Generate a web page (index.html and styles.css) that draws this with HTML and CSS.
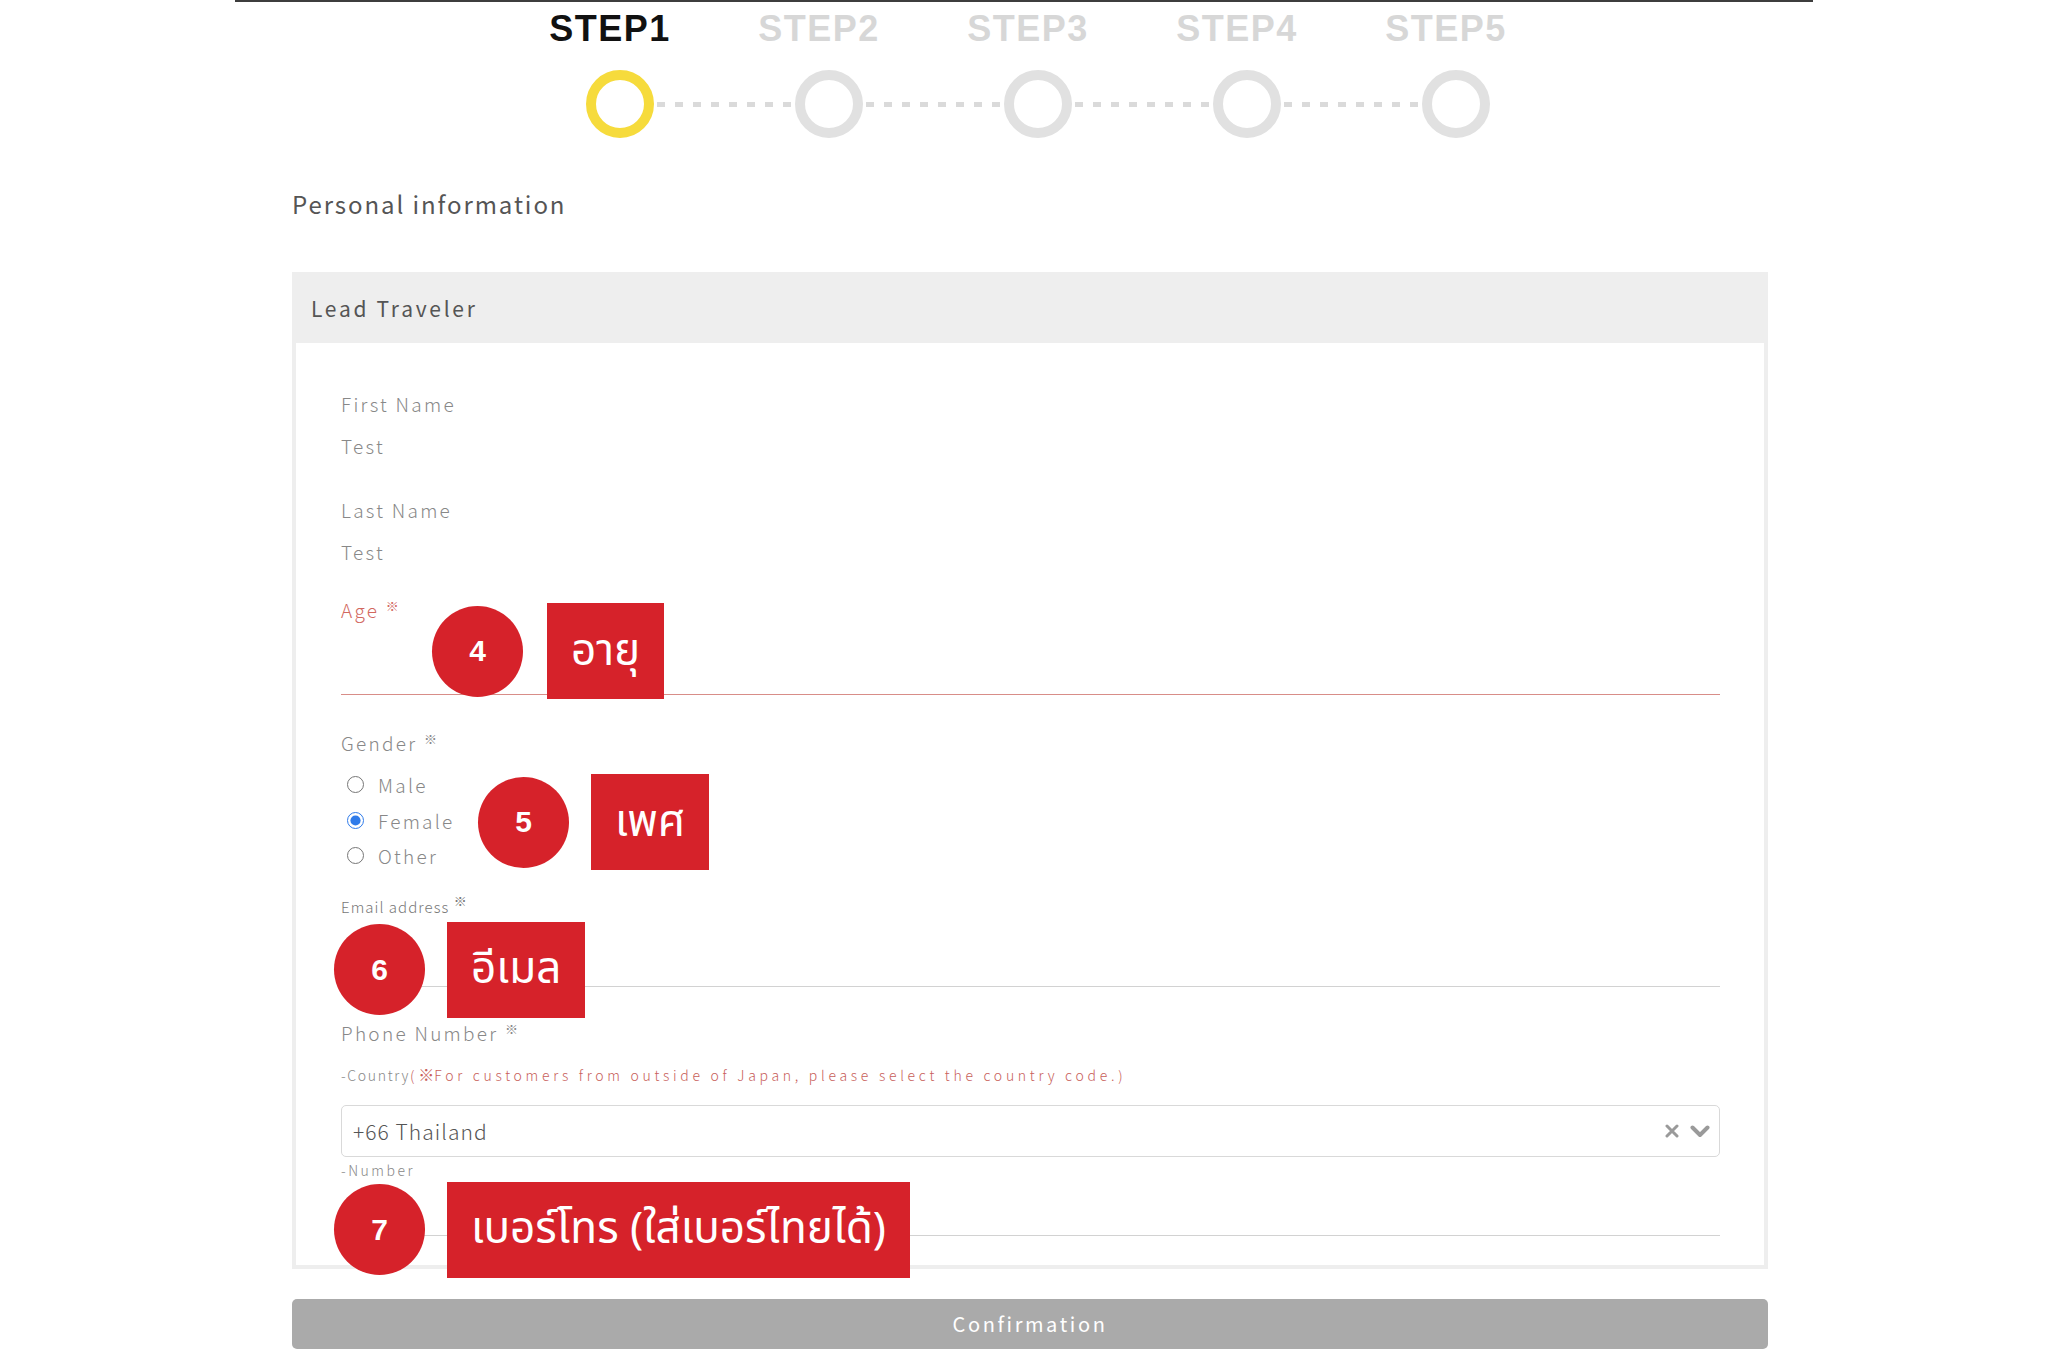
FILE: index.html
```html
<!DOCTYPE html>
<html lang="en">
<head>
<meta charset="utf-8">
<title>Personal information</title>
<link rel="stylesheet" href="styles.css">
</head>
<body>
<div class="topline"></div>

<section class="steps">
  <div class="step-labels">
    <div class="step-label active">STEP1</div>
    <div class="step-label">STEP2</div>
    <div class="step-label">STEP3</div>
    <div class="step-label">STEP4</div>
    <div class="step-label">STEP5</div>
  </div>
  <div class="step-track">
    <span class="dot active"></span><span class="link"></span>
    <span class="dot"></span><span class="link"></span>
    <span class="dot"></span><span class="link"></span>
    <span class="dot"></span><span class="link"></span>
    <span class="dot"></span>
  </div>
</section>

<main class="main">
  <h2 class="page-title">Personal information</h2>

  <section class="card">
    <header class="card-head">Lead Traveler</header>
    <div class="card-body">

      <div class="field">
        <div class="label">First Name</div>
        <div class="value">Test</div>
      </div>

      <div class="field gap-lg">
        <div class="label">Last Name</div>
        <div class="value">Test</div>
      </div>

      <div class="field field-age">
        <div class="label label-err">Age <span class="req">※</span></div>
        <div class="line-input line-err"></div>
        <div class="ann ann-4">
          <span class="ann-num">4</span>
          <span class="ann-box">อายุ</span>
        </div>
      </div>

      <div class="field field-gender">
        <div class="label">Gender <span class="req">※</span></div>
        <div class="radios">
          <label class="radio"><input type="radio" name="gender"><span>Male</span></label>
          <label class="radio"><input type="radio" name="gender" checked><span>Female</span></label>
          <label class="radio"><input type="radio" name="gender"><span>Other</span></label>
        </div>
        <div class="ann ann-5">
          <span class="ann-num">5</span>
          <span class="ann-box">เพศ</span>
        </div>
      </div>

      <div class="field field-email">
        <div class="label-sm">Email address <span class="req">※</span></div>
        <div class="line-input line-email"></div>
        <div class="ann ann-6">
          <span class="ann-num">6</span>
          <span class="ann-box">อีเมล</span>
        </div>
      </div>

      <div class="field field-phone">
        <div class="label">Phone Number <span class="req">※</span></div>
        <div class="note"><span class="note-key">-Country</span><span class="note-err">(<span class="mark">※</span>For customers from outside of Japan, please select the country code.)</span></div>
        <div class="select">
          <span class="select-value">+66 Thailand</span>
          <span class="select-icons">
            <svg class="ico-x" width="14" height="14" viewBox="0 0 14 14"><path d="M2 2 L12 12 M12 2 L2 12" stroke="#9a9a9a" stroke-width="3" stroke-linecap="round" fill="none"/></svg>
            <svg class="ico-chev" width="20" height="14" viewBox="0 0 20 14"><path d="M2.5 3.5 L10 11 L17.5 3.5" stroke="#9a9a9a" stroke-width="4" stroke-linecap="round" stroke-linejoin="round" fill="none"/></svg>
          </span>
        </div>
        <div class="sub-field">
          <div class="note note-num">-Number</div>
          <div class="line-input line-num"></div>
          <div class="ann ann-7">
            <span class="ann-num">7</span>
            <span class="ann-box">เบอร์โทร (ใส่เบอร์ไทยได้)</span>
          </div>
        </div>
      </div>

    </div>
  </section>

  <button class="confirm" type="button">Confirmation</button>
</main>
</body>
</html>
```

FILE: styles.css
```css
* { box-sizing: border-box; }

html, body {
  margin: 0;
  padding: 0;
  background: #ffffff;
}

body {
  font-family: "Noto Sans CJK JP", "Noto Sans", sans-serif;
  font-weight: 300;
  color: #888;
  width: 2048px;
  min-height: 1366px;
}

/* top rule */
.topline {
  width: 1578px;
  margin: 0 auto;
  border-top: 2px solid #3d3d3d;
}

/* steps */
.steps {
  padding-top: 5px;
}

.step-labels {
  display: flex;
  justify-content: center;
  padding-left: 8px;
}

.step-label {
  width: 209px;
  text-align: center;
  font-family: "Liberation Sans", Arial, sans-serif;
  font-weight: 700;
  font-size: 36px;
  line-height: 43px;
  letter-spacing: 1.5px;
  color: #d7d7d7;
}

.step-label.active {
  color: #111;
}

.step-track {
  display: flex;
  align-items: center;
  justify-content: center;
  padding-left: 28px;
  margin-top: 20px;
}

.dot {
  display: block;
  width: 68px;
  height: 68px;
  border-radius: 50%;
  border: 10px solid #e1e1e1;
  flex: none;
}

.dot.active {
  border-color: #f6db3c;
}

.link {
  display: block;
  width: 141px;
  height: 5px;
  flex: none;
  background-image: linear-gradient(90deg, #dadada 8px, transparent 8px);
  background-size: 18px 5px;
  background-position: 3px 0;
  background-repeat: repeat-x;
}

/* main column */
.main {
  width: 1476px;
  margin-left: calc(50% - 732px);
}

.page-title {
  margin: 50px 0 0;
  font-weight: 400;
  font-size: 24px;
  line-height: 32px;
  letter-spacing: 0.08em;
  color: #555;
}

.card {
  margin-top: 52px;
}

.card-head {
  height: 71px;
  display: flex;
  align-items: center;
  padding-left: 19px;
  background: #eeeeee;
  font-weight: 400;
  font-size: 21px;
  line-height: 28px;
  letter-spacing: 0.13em;
  color: #555;
}

.card-body {
  border: 4px solid #eeeeee;
  border-top: 0;
  padding: 49px 44px 29px 45px;
}

.field {
  position: relative;
}

.label {
  font-size: 19px;
  line-height: 24px;
  letter-spacing: 0.12em;
  color: #888;
}

.label-err {
  color: #d2685f;
}

.req {
  font-size: 13px;
  line-height: 0;
  vertical-align: 7px;
  letter-spacing: 0;
}

.value {
  margin-top: 18px;
  font-size: 19px;
  line-height: 24px;
  letter-spacing: 0.12em;
  color: #888;
}

.gap-lg { margin-top: 40px; }

.field-age { margin-top: 34px; }
.field-gender { margin-top: 36px; }
.field-email { margin-top: 23px; }
.field-phone { margin-top: 34px; }

.line-input {
  border-bottom: 1px solid #d2d2d2;
}

.line-err {
  height: 73px;
  border-bottom-color: #d88d88;
}

.line-email {
  height: 70px;
}

.line-num {
  height: 56px;
}

/* radios */
.radios {
  margin-top: 12px;
  display: flex;
  flex-direction: column;
}

.radio {
  height: 35.5px;
  display: flex;
  align-items: center;
  gap: 14px;
  padding-left: 6px;
  font-size: 19px;
  letter-spacing: 0.12em;
  color: #888;
}

.radio input {
  width: 17px;
  height: 17px;
  margin: 0;
  accent-color: #2f7bea;
}

/* small labels / notes */
.label-sm {
  font-size: 15px;
  line-height: 20px;
  letter-spacing: 0.07em;
  color: #777;
}

.note {
  margin-top: 20px;
  font-size: 14px;
  line-height: 20px;
  letter-spacing: 0.265em;
  color: #888;
}

.note-key { letter-spacing: 0.12em; }

.note-err {
  color: #c8605a;
}

.mark {
  font-size: 16px;
  line-height: 0;
  letter-spacing: 0;
}

.note-num {
  margin-top: 3px;
  letter-spacing: 0.18em;
}

/* select */
.select {
  margin-top: 20px;
  height: 52px;
  border: 1px solid #d9d9d9;
  border-radius: 5px;
  display: flex;
  align-items: center;
  justify-content: space-between;
  padding: 0 9px 0 11px;
}

.select-value {
  font-size: 21px;
  letter-spacing: 0.05em;
  color: #555;
}

.select-icons {
  display: flex;
  align-items: center;
  gap: 11px;
}

.sub-field {
  position: relative;
}

/* annotations (overlay) */
.ann {
  position: absolute;
  display: flex;
  align-items: center;
  gap: 22px;
}

.ann-num {
  width: 91px;
  height: 91px;
  border-radius: 50%;
  background: #d6222a;
  color: #fff;
  display: flex;
  align-items: center;
  justify-content: center;
  font-family: "Liberation Sans", Arial, sans-serif;
  font-weight: 700;
  font-size: 30px;
  flex: none;
}

.ann-box {
  height: 96px;
  padding: 0 24px;
  background: #d6222a;
  color: #fff;
  display: flex;
  align-items: center;
  font-family: "Noto Sans Thai", "Noto Sans", "DejaVu Sans", sans-serif;
  font-weight: 400;
  font-size: 44px;
  white-space: nowrap;
  flex: none;
}

.ann-4 { left: 91px; top: 5px; gap: 24px; }
.ann-5 { left: 137px; top: 43px; }
.ann-6 { left: -7px; top: 25px; }
.ann-7 { left: -7px; top: 22px; }

/* button */
.confirm {
  display: block;
  width: 100%;
  height: 50px;
  margin-top: 30px;
  border: 0;
  border-radius: 5px;
  background: #aaaaaa;
  color: #fff;
  font-family: "Noto Sans CJK JP", "Noto Sans", sans-serif;
  font-weight: 400;
  font-size: 20px;
  letter-spacing: 0.13em;
  padding: 0;
}
```
